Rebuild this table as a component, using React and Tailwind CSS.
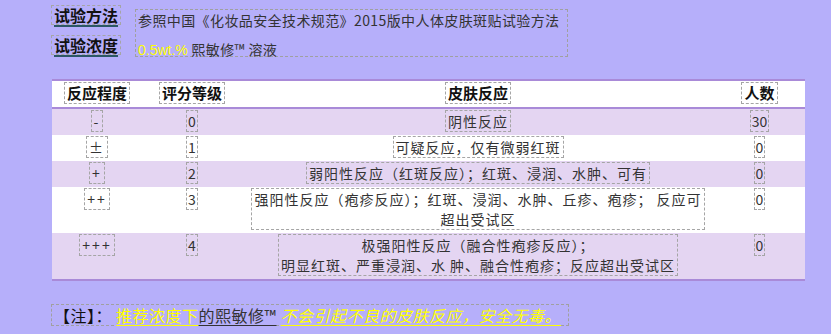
import React from "react";

const rows = [
  { level: "-", score: "0", text: ["阴性反应"], count: "30", shade: true },
  { level: "±", score: "1", text: ["可疑反应，仅有微弱红斑"], count: "0", shade: false },
  { level: "+", score: "2", text: ["弱阳性反应（红斑反应）；红斑、浸润、水肿、可有 "], count: "0", shade: true },
  {
    level: "++",
    score: "3",
    text: ["强阳性反应（疱疹反应）；红斑、浸润、水肿、丘疹、疱疹； 反应可", "超出受试区"],
    count: "0",
    shade: false,
  },
  {
    level: "+++",
    score: "4",
    text: ["极强阳性反应（融合性疱疹反应）；", "明显红斑、严重浸润、水 肿、融合性疱疹；反应超出受试区"],
    count: "0",
    shade: true,
  },
];

const Box = ({ children, className = "" }) => (
  <span className={`inline-block border border-dashed border-[#a5a5a5] ${className}`}>{children}</span>
);

const App = () => {
  return (
    <div className="w-[831px] h-[334px] overflow-hidden bg-[#b6affa] text-[#333] font-['Noto_Sans_CJK_SC',sans-serif]">
      {/* test method / concentration */}
      <div className="flex pl-[51px] pt-[5px]">
        <div className="flex flex-col gap-[10px]">
          <Box className="px-[2px] text-[16px] leading-[18px] font-bold text-[#111] underline decoration-[#2c5866] decoration-2 underline-offset-[3px]">
            试验方法
          </Box>
          <Box className="px-[2px] text-[16px] leading-[18px] font-bold text-[#111] underline decoration-[#2c5866] decoration-2 underline-offset-[3px]">
            试验浓度
          </Box>
        </div>
        <div className="ml-[14px] mt-[4px] w-[433px] h-[48px] border border-dashed border-[#a0a0a0] px-[2px] pt-[1px] text-[14px] tracking-[0.4px] leading-[18px]">
          <p>参照中国《化妆品安全技术规范》2015版中人体皮肤斑贴试验方法</p>
          <p className="mt-[11px]">
            <span className="text-[#ffff00] tracking-normal font-['Liberation_Sans',sans-serif] text-[14px]">0.5wt.%</span> 熙敏修™ 溶液
          </p>
        </div>
      </div>

      {/* reaction table */}
      <table className="mt-[22px] ml-[52px] w-[753px] table-fixed border-collapse text-[14px] tracking-[1px] leading-[20px]">
        <colgroup>
          <col className="w-[90px]" />
          <col className="w-[100px]" />
          <col className="w-[472px]" />
          <col className="w-[91px]" />
        </colgroup>
        <thead>
          <tr className="bg-white border-t-2 border-b-2 border-[#a98ad8] text-[15px] tracking-normal font-bold text-[#111]">
            <th className="pt-[1px] pb-[3px]"><Box className="px-[2px]">反应程度</Box></th>
            <th className="pt-[1px] pb-[3px]"><Box className="px-[2px]">评分等级</Box></th>
            <th className="pt-[1px] pb-[3px]"><Box className="px-[2px]">皮肤反应</Box></th>
            <th className="pt-[1px] pb-[3px]"><Box className="px-[2px]">人数</Box></th>
          </tr>
        </thead>
        <tbody className="border-b-2 border-[#a98ad8]">
          {rows.map((r, idx) => (
            <tr key={idx} className={r.shade ? "bg-[#e4d5f2]" : "bg-white"}>
              <td className="align-top text-center pt-[1px] pb-[3px]">
                <Box className="px-[2px] tracking-[2px]">{r.level}</Box>
              </td>
              <td className="align-top text-center pt-[1px] pb-[3px]">
                <Box className="px-[1px] tracking-normal">{r.score}</Box>
              </td>
              <td className="align-top text-center pt-[1px] pb-[3px]">
                <Box className="px-[2px]">
                  {r.text.map((line, i) => (
                    <span key={i}>
                      {i > 0 && <br />}
                      {line}
                    </span>
                  ))}
                </Box>
              </td>
              <td className="align-top text-center pt-[1px] pb-[3px]">
                <Box className="px-[1px] tracking-normal">{r.count}</Box>
              </td>
            </tr>
          ))}
        </tbody>
      </table>

      {/* note */}
      <div className="mt-[23px] ml-[51px] w-[518px] border border-dashed border-[#a0a0a0] pl-[2px] text-[16px] leading-[20px] tracking-[0.5px]">
        <span className="text-[#111]">【注】： </span>
        <span className="text-[#ffff00] underline decoration-[#ffff00] underline-offset-[3px]">推荐浓度下</span>
        <span className="underline decoration-[#333] underline-offset-[3px]">的熙敏修™</span>{" "}
        <span className="text-[#ffff00] italic underline decoration-[#ffff00] underline-offset-[3px]">
          不会引起不良的皮肤反应，安全无毒。
        </span>
      </div>
    </div>
  );
};

export default App;
